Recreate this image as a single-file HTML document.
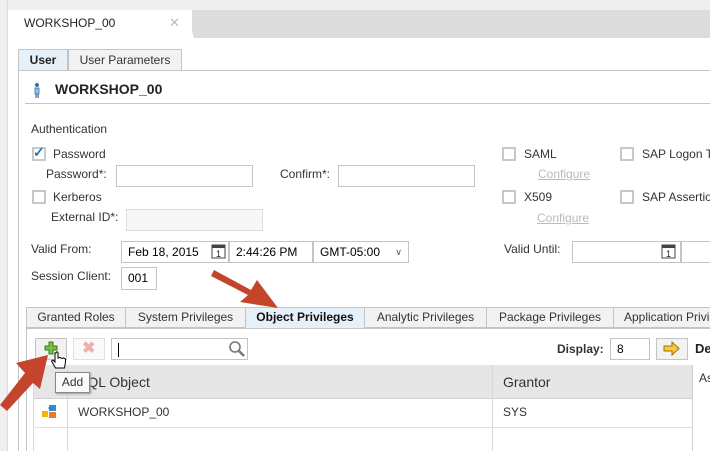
<!DOCTYPE html>
<html><head><meta charset="utf-8"><style>
*{box-sizing:border-box;margin:0;padding:0}
body{width:710px;height:451px;overflow:hidden;background:#fff;font-family:"Liberation Sans",Arial,sans-serif;font-size:12px;color:#333;position:relative}
.a{position:absolute}
.inp{position:absolute;border:1px solid #c4c4c4;background:#fff;height:22px;padding:0 6px;line-height:20px;color:#000}
.cb{position:absolute;width:14px;height:14px;border:2px solid #c8c8c8;background:#fff}
.lbl{position:absolute;color:#333;white-space:nowrap}
.tab{position:absolute;top:307px;height:21px;border:1px solid #c4c4c4;background:#f2f2f2;text-align:center;line-height:19px;color:#333}
.cfg{position:absolute;color:#bbb;text-decoration:underline}
</style></head><body>
<div class="a" style="left:0;top:0;width:710px;height:10px;background:#efefef"></div>
<div class="a" style="left:0;top:0;width:8px;height:451px;background:#efefef;border-right:1px solid #ddd"></div>
<div class="a" style="left:192px;top:10px;width:518px;height:28px;background:#dcdcdc"></div>
<svg class="a" style="left:8px;top:10px" width="190" height="28"><polygon points="0,28 3,0 178,0 186,28" fill="#fff"/></svg>
<div class="lbl" style="left:24px;top:16px;font-size:12px;color:#222">WORKSHOP_00</div>
<div class="lbl" style="left:169px;top:15px;font-size:13px;color:#bbb">✕</div>
<div class="a" style="left:18px;top:49px;width:50px;height:22px;background:#e5f0f8;border:1px solid #c4c4c4;text-align:center;line-height:20px;font-weight:bold;color:#222">User</div>
<div class="a" style="left:68px;top:49px;width:114px;height:22px;background:#f2f2f2;border:1px solid #c4c4c4;text-align:center;line-height:20px;color:#333">User Parameters</div>
<div class="a" style="left:18px;top:70px;width:692px;height:1px;background:#c4c4c4"></div>
<div class="a" style="left:18px;top:70px;width:1px;height:381px;background:#c4c4c4"></div>
<svg class="a" style="left:32px;top:82px" width="10" height="16"><circle cx="5" cy="3" r="2" fill="#3a6ea5"/><rect x="3" y="6" width="4" height="6" fill="#9cc0e0" stroke="#3a6ea5" stroke-width="0.8"/><rect x="3.5" y="12" width="1.2" height="4" fill="#3a6ea5"/><rect x="5.5" y="12" width="1.2" height="4" fill="#3a6ea5"/></svg>
<div class="lbl" style="left:55px;top:81px;font-size:14px;font-weight:bold;color:#222">WORKSHOP_00</div>
<div class="a" style="left:25px;top:103px;width:685px;height:1px;background:#c4c4c4"></div>
<div class="lbl" style="left:31px;top:122px">Authentication</div>
<div class="cb" style="left:32px;top:147px"></div>
<div class="lbl" style="left:33px;top:144px;color:#1a75c2;font-size:14px;font-weight:bold">✓</div>
<div class="lbl" style="left:53px;top:147px">Password</div>
<div class="lbl" style="left:46px;top:167px">Password*:</div>
<div class="inp" style="left:116px;top:165px;width:137px"></div>
<div class="lbl" style="left:280px;top:167px">Confirm*:</div>
<div class="inp" style="left:338px;top:165px;width:137px"></div>
<div class="cb" style="left:32px;top:190px"></div>
<div class="lbl" style="left:53px;top:190px">Kerberos</div>
<div class="lbl" style="left:51px;top:210px">External ID*:</div>
<div class="inp" style="left:126px;top:209px;width:137px;background:#f7f7f7;border-color:#ddd"></div>
<div class="cb" style="left:502px;top:147px"></div>
<div class="lbl" style="left:524px;top:147px">SAML</div>
<div class="cfg" style="left:538px;top:167px">Configure</div>
<div class="cb" style="left:620px;top:147px"></div>
<div class="lbl" style="left:642px;top:147px">SAP Logon T</div>
<div class="cb" style="left:502px;top:190px"></div>
<div class="lbl" style="left:524px;top:190px">X509</div>
<div class="cfg" style="left:537px;top:211px">Configure</div>
<div class="cb" style="left:620px;top:190px"></div>
<div class="lbl" style="left:642px;top:190px">SAP Assertio</div>
<div class="lbl" style="left:31px;top:242px">Valid From:</div>
<div class="inp" style="left:121px;top:241px;width:108px">Feb 18, 2015</div>
<div class="inp" style="left:229px;top:241px;width:84px">2:44:26 PM</div>
<div class="inp" style="left:313px;top:241px;width:96px">GMT-05:00<span style="position:absolute;right:6px;top:0;font-size:9px;color:#555">&#x2228;</span></div>
<svg class="a" style="left:211px;top:243px" width="15" height="16"><rect x="1" y="2" width="13" height="13" fill="#fff" stroke="#444"/><rect x="1" y="2" width="13" height="3" fill="#444"/><text x="5" y="14" font-size="9" font-family="Liberation Sans" fill="#222">1</text></svg>
<div class="lbl" style="left:504px;top:242px">Valid Until:</div>
<div class="inp" style="left:572px;top:241px;width:109px"></div>
<div class="inp" style="left:681px;top:241px;width:40px"></div>
<svg class="a" style="left:661px;top:243px" width="15" height="16"><rect x="1" y="2" width="13" height="13" fill="#fff" stroke="#444"/><rect x="1" y="2" width="13" height="3" fill="#444"/><text x="5" y="14" font-size="9" font-family="Liberation Sans" fill="#222">1</text></svg>
<div class="lbl" style="left:31px;top:269px">Session Client:</div>
<div class="inp" style="left:121px;top:267px;width:36px;height:23px;line-height:21px">001</div>
<div class="a" style="left:26px;top:328px;width:684px;height:1px;background:#c4c4c4"></div>
<div class="a" style="left:26px;top:307px;width:1px;height:144px;background:#c4c4c4"></div>
<div class="tab" style="left:26px;width:100px">Granted Roles</div>
<div class="tab" style="left:125px;width:121px">System Privileges</div>
<div class="tab" style="left:245px;width:120px;background:#e5f0f8;font-weight:bold;color:#111;border-bottom-color:#e5f0f8">Object Privileges</div>
<div class="tab" style="left:364px;width:123px">Analytic Privileges</div>
<div class="tab" style="left:486px;width:128px">Package Privileges</div>
<div class="tab" style="left:613px;width:110px;text-align:left;padding-left:10px">Application Privi</div>
<div class="a" style="left:35px;top:338px;width:32px;height:22px;border:1px solid #c4c4c4;background:#f2f2f2"></div>
<svg class="a" style="left:44px;top:341px" width="14" height="14"><path d="M5,1 h4 v4 h4 v4 h-4 v4 h-4 v-4 h-4 v-4 h4z" fill="#7cc043" stroke="#3d7a1a" stroke-width="1"/></svg>
<div class="a" style="left:73px;top:338px;width:32px;height:22px;border:1px solid #e0e0e0;background:#fafafa"></div>
<div class="lbl" style="left:82px;top:338px;color:#f0b0b0;font-size:16px;font-weight:bold">✖</div>
<div class="inp" style="left:111px;top:338px;width:137px"><span style="display:inline-block;width:1px;height:14px;background:#000;vertical-align:middle"></span></div>
<svg class="a" style="left:228px;top:340px" width="18" height="18"><circle cx="7" cy="7" r="5" fill="none" stroke="#777" stroke-width="1.6"/><line x1="11" y1="11" x2="16" y2="16" stroke="#777" stroke-width="2.5"/></svg>
<div class="lbl" style="left:557px;top:342px;font-weight:bold">Display:</div>
<div class="inp" style="left:610px;top:338px;width:40px">8</div>
<div class="a" style="left:656px;top:338px;width:32px;height:22px;border:1px solid #c4c4c4;background:#f2f2f2"></div>
<svg class="a" style="left:663px;top:341px" width="18" height="15"><polygon points="1,5 9,5 9,1 16,7.5 9,14 9,10 1,10" fill="#f5c842" stroke="#a07000"/></svg>
<div class="lbl" style="left:695px;top:341px;font-weight:bold;font-size:13px;color:#222">De</div>
<div class="a" style="left:33px;top:365px;width:659px;height:34px;background:#e6e6e6;border-bottom:1px solid #d0d0d0"></div>
<div class="a" style="left:67px;top:365px;width:1px;height:86px;background:#d8d8d8"></div>
<div class="a" style="left:492px;top:365px;width:1px;height:86px;background:#d8d8d8"></div>
<div class="a" style="left:33px;top:365px;width:1px;height:86px;background:#d8d8d8"></div>
<div class="a" style="left:692px;top:365px;width:1px;height:86px;background:#d0d0d0"></div>
<div class="lbl" style="left:78px;top:374px;font-size:14px;color:#333">SQL Object</div>
<div class="lbl" style="left:503px;top:374px;font-size:14px;color:#333">Grantor</div>
<div class="lbl" style="left:699px;top:371px">As</div>
<div class="a" style="left:33px;top:427px;width:659px;height:1px;background:#e0e0e0"></div>
<svg class="a" style="left:42px;top:405px" width="16" height="14"><rect x="0" y="6" width="6" height="6" fill="#f5b400"/><rect x="7" y="0" width="7" height="6" fill="#2f8ad8"/><rect x="7" y="7" width="7" height="6" fill="#f07828"/><line x1="6" y1="3" x2="7" y2="3" stroke="#2f8ad8"/></svg>
<div class="lbl" style="left:78px;top:405px">WORKSHOP_00</div>
<div class="lbl" style="left:503px;top:405px">SYS</div>
<div class="a" style="left:55px;top:372px;width:35px;height:21px;background:#fafafa;border:1px solid #888;box-shadow:1px 1px 2px #999;text-align:center;line-height:19px;color:#333">Add</div>
<svg class="a" style="left:50px;top:351px" width="20" height="22"><path d="M5,2 v9 l-2,-2 -1.5,1 4,7 h9 l1,-6 v-3 l-2,-1 -1.5,0.5 -2,-1 -2,0.5 v-5 c0,-1.5 -2,-1.5 -2,0z" fill="#fff" stroke="#000" stroke-width="1"/></svg>
<svg class="a" style="left:0;top:260px" width="300" height="190">
<polygon points="214,10 251,30 257,20 278,48 240,42 248,35 211,16" fill="#c4452c"/>
<polygon points="0,145 7,151 33,123 40,129 48,95 16,103 25,113" fill="#c4452c"/>
</svg>
</body></html>
